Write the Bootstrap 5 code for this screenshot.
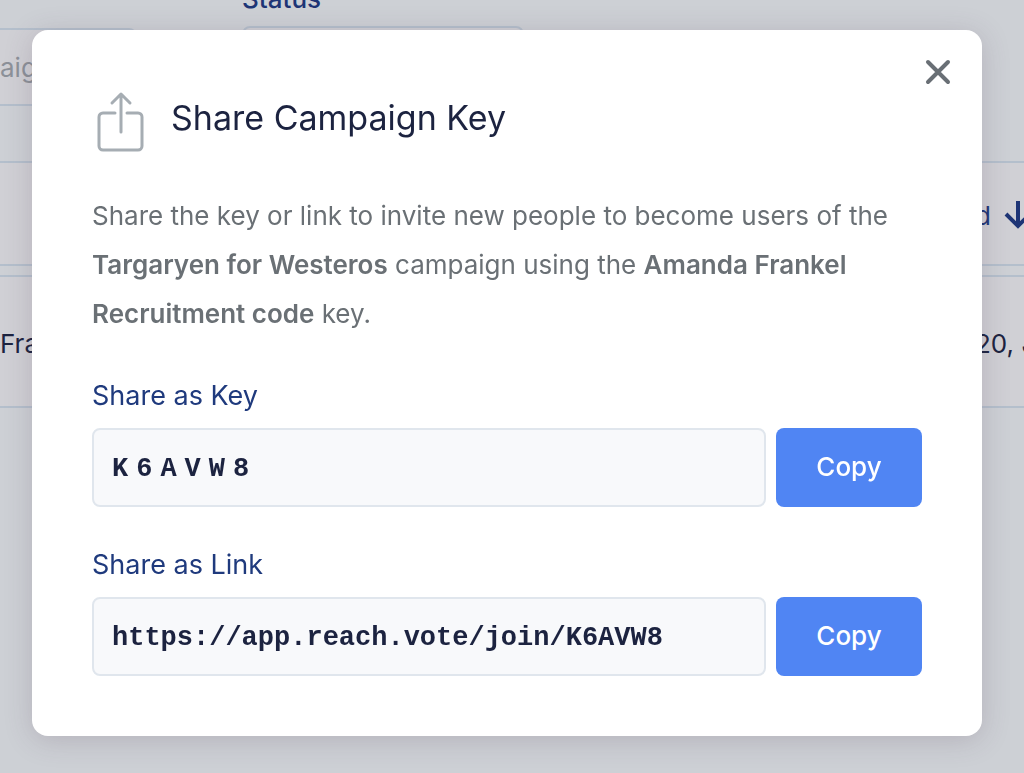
<!DOCTYPE html>
<html lang="en">
<head>
<meta charset="utf-8">
<meta name="viewport" content="width=device-width, initial-scale=1">
<title>Share Campaign Key</title>
<link href="https://cdn.jsdelivr.net/npm/bootstrap@5.3.0/dist/css/bootstrap.min.css" rel="stylesheet">
<style>
  body { font-family: "Inter", "Liberation Sans", sans-serif; font-size: 26px; background: #cdd0d5; color: #1c2340; }
  .page { height: 100vh; }
  .filter-name { width: 137px; margin-top: 28px; }
  .filter-status { width: 282px; margin-left: 105px; margin-top: -20px; }
  .filter-label { color: #1e3576; font-size: 26px; line-height: 38px; margin-bottom: 8px; font-weight: 500; }
  .filter-box { height: 78px; border: 2px solid #b4bfcc; border-radius: 8px; background: #d0d0d5; font-size: 26px; color: #8c9199; }
  .filter-box::placeholder { color: #8c9199; opacity: 1; }
  .filter-name .filter-box { border-left: 0; border-top-left-radius: 0; border-bottom-left-radius: 0; }
  .codes { table-layout: fixed; border-collapse: separate; border-spacing: 0 9px; width: 100%; margin-top: 46px; }
  .codes th, .codes td { background: #d0d0d5; border-top: 2px solid #b4bfcc; border-bottom: 2px solid #b4bfcc; padding: 3px 0 0; white-space: nowrap; overflow: hidden; font-size: 26px; font-weight: 400; }
  .codes th { height: 105px; color: #1e3576; }
  .codes td { height: 133px; }
  .codes .col-date { width: 49px; }
  .sort-arrow { margin-left: 13px; }

  .share-modal { padding: 30px 42px 30px 32px; }
  .share-modal .modal-dialog { max-width: none; margin: 0; }
  .share-modal .modal-content { border: 0; border-radius: 16px; padding: 60px; box-shadow: 0 4px 28px rgba(90, 70, 90, .22); }
  .close-btn { position: absolute; top: 24px; right: 26px; width: 36px; height: 36px; line-height: 0; }
  .share-title { font-size: 34px; line-height: 40px; font-weight: 400; color: #1c2340; margin: 8px 0 0 21px; }
  .share-text { font-size: 26px; line-height: 49px; color: #6a7075; margin: 37px 0 0; }
  .share-text strong { font-weight: 600; }
  .share-label { font-size: 27px; line-height: 40px; color: #1f3a7d; margin-bottom: 12px; }
  .share-row { gap: 10px; }
  .share-field { height: 79px; border: 2px solid #e0e6ed; border-radius: 8px; background: #f8f9fb; padding: 2px 18px 0; font: 700 27px "Liberation Mono", monospace; color: #1c2340; }
  .share-key { letter-spacing: 8px; }
  .copy-btn { width: 146px; height: 79px; border: 0; border-radius: 8px; background: #5085f3; color: #fff; font-size: 26px; font-weight: 500; padding: 0 0 2px; }
  .group-key, .group-link { margin-top: 38px; }
</style>
</head>
<body>
<div class="page overflow-hidden" aria-hidden="true">
  <div class="d-flex align-items-start">
    <div class="filter-name">
      <input class="filter-box form-control ps-0" type="text" placeholder="aig" aria-label="Search" tabindex="-1">
    </div>
    <div class="filter-status">
      <label class="filter-label d-block" for="status">Status</label>
      <select class="filter-box form-select" id="status" tabindex="-1"><option></option></select>
    </div>
  </div>
  <table class="codes">
    <thead>
      <tr>
        <th></th>
        <th class="col-date"><div class="d-flex align-items-center">d<svg class="sort-arrow flex-shrink-0" width="28" height="30" viewBox="0 0 28 30" fill="none" stroke="#1e3576" stroke-width="4"><path d="M14 1v25M2 14l12 12 12-12"/></svg></div></th>
      </tr>
    </thead>
    <tbody>
      <tr><td>Fra</td><td>20, J</td></tr>
    </tbody>
  </table>
</div>

<div class="modal show d-block share-modal" role="dialog" aria-modal="true" aria-labelledby="shareTitle">
  <div class="modal-dialog">
    <div class="modal-content">
      <button class="btn p-0 close-btn" type="button" aria-label="Close">
        <svg width="26" height="26" viewBox="0 0 26 26" fill="none" stroke="#696f75" stroke-width="4" stroke-linecap="round"><path d="M3 3l20 20M23 3L3 23"/></svg>
      </button>
      <div class="d-flex align-items-start">
        <svg class="flex-shrink-0" width="58" height="64" viewBox="0 0 58 64" fill="none" stroke="#a6adb3" stroke-width="3" stroke-linecap="round" stroke-linejoin="round"><path d="M23 23H11a4 4 0 0 0-4 4v29a4 4 0 0 0 4 4h35a4 4 0 0 0 4-4V27a4 4 0 0 0-4-4H35M29 42V4M20 13l9-9 9 9"/></svg>
        <h1 class="share-title" id="shareTitle">Share Campaign Key</h1>
      </div>
      <p class="share-text">Share the key or link to invite new people to become users of the <strong>Targaryen for Westeros</strong> campaign using the <strong>Amanda Frankel Recruitment code</strong> key.</p>
      <div class="group-key">
        <label class="share-label d-block" for="shareKey">Share as Key</label>
        <div class="d-flex share-row">
          <input class="form-control share-field share-key" id="shareKey" type="text" value="K6AVW8" readonly>
          <button class="btn copy-btn flex-shrink-0" type="button">Copy</button>
        </div>
      </div>
      <div class="group-link">
        <label class="share-label d-block" for="shareLink">Share as Link</label>
        <div class="d-flex share-row">
          <input class="form-control share-field" id="shareLink" type="text" value="https://app.reach.vote/join/K6AVW8" readonly>
          <button class="btn copy-btn flex-shrink-0" type="button">Copy</button>
        </div>
      </div>
    </div>
  </div>
</div>
<script src="https://cdn.jsdelivr.net/npm/bootstrap@5.3.0/dist/js/bootstrap.bundle.min.js"></script>
</body>
</html>
